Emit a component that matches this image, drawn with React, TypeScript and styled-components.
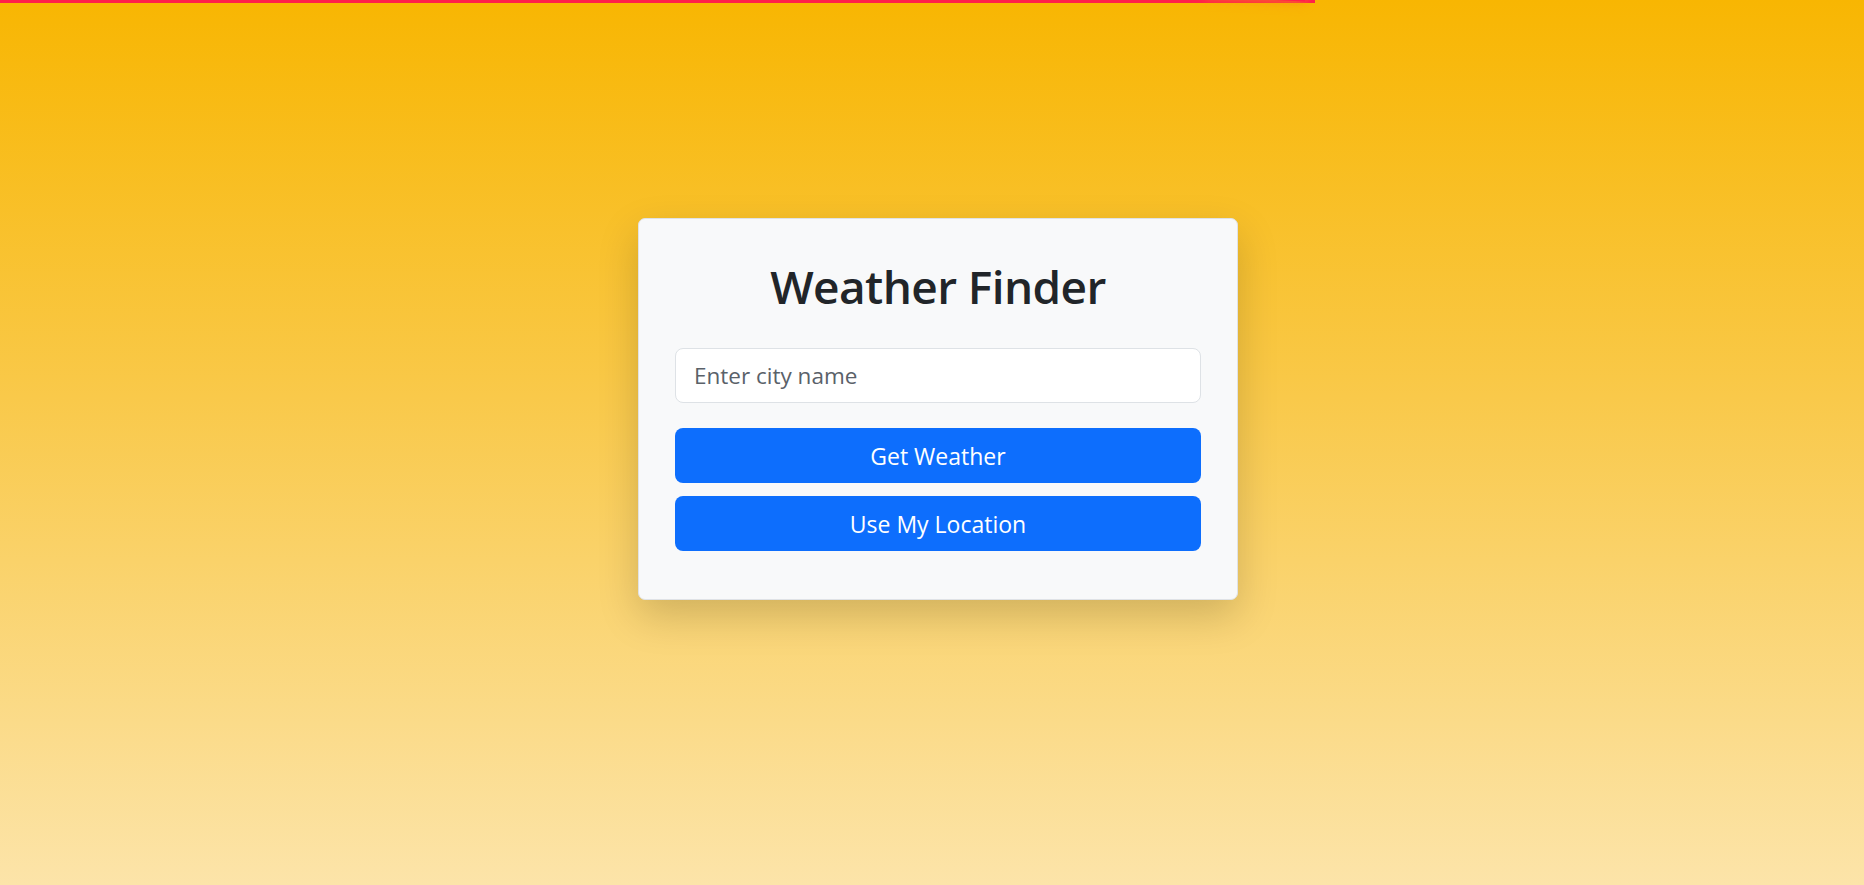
import React from 'react'
import styled, { createGlobalStyle } from 'styled-components'

const GlobalStyle = createGlobalStyle`
  * {
    box-sizing: border-box;
  }
  html, body {
    margin: 0;
    padding: 0;
    height: 100%;
  }
  body {
    font-family: "Open Sans", "Noto Sans", "Liberation Sans", sans-serif;
    color: #212529;
  }
`

const Page = styled.div`
  min-height: 100vh;
  width: 100%;
  background: linear-gradient(to bottom, #f8b602 0%, #f9c94a 45%, #fce4a9 100%);
  display: flex;
  justify-content: center;
  align-items: flex-start;
  padding: 218px 0 0 12px;
`

// loading bar across the top
const ProgressBar = styled.div`
  position: fixed;
  top: 0;
  left: 0;
  width: 1315px;
  height: 3px;
  background: #ff1f4b;
  z-index: 10;
`

const Peg = styled.div`
  position: absolute;
  right: 10px;
  top: 0;
  width: 100px;
  height: 100%;
  box-shadow: 0 0 14px #f58a1a, 0 0 7px #f58a1a;
  transform: rotate(3deg) translate(0px, -4px);
`

const Card = styled.div`
  width: 600px;
  height: 382px;
  background: #f8f9fa;
  border: 1px solid #dfe2e6;
  border-radius: 7px;
  box-shadow: 0 16px 40px rgba(0, 0, 0, 0.17);
  padding: 40px 36px 0;
  display: flex;
  flex-direction: column;
`

const Title = styled.h1`
  margin: 0 0 34px;
  text-align: center;
  font-size: 46px;
  font-weight: 600;
  line-height: 1.2;
  letter-spacing: -0.6px;
  color: #212529;
`

const CityInput = styled.input`
  width: 100%;
  height: 55px;
  border: 1px solid #dee2e6;
  border-radius: 8px;
  background: #fff;
  padding: 0 18px;
  font-family: "Open Sans", "Noto Sans", sans-serif;
  font-size: 22.5px;
  color: #212529;
  margin-bottom: 25px;
  outline: none;

  &::placeholder {
    color: #5a6169;
  }
`

const ActionButton = styled.button`
  width: 100%;
  height: 55px;
  border: none;
  border-radius: 8px;
  background: #0d6efd;
  color: #fff;
  font-family: "Open Sans", "Noto Sans", sans-serif;
  font-size: 23px;
  cursor: pointer;
  margin-bottom: 13px;
`

const App = () => {
  return (
    <>
      <GlobalStyle />
      <ProgressBar>
        <Peg />
      </ProgressBar>
      <Page>
        <Card>
          <Title>Weather Finder</Title>
          <CityInput type="text" placeholder="Enter city name" />
          <ActionButton>Get Weather</ActionButton>
          <ActionButton>Use My Location</ActionButton>
        </Card>
      </Page>
    </>
  )
}

export default App
